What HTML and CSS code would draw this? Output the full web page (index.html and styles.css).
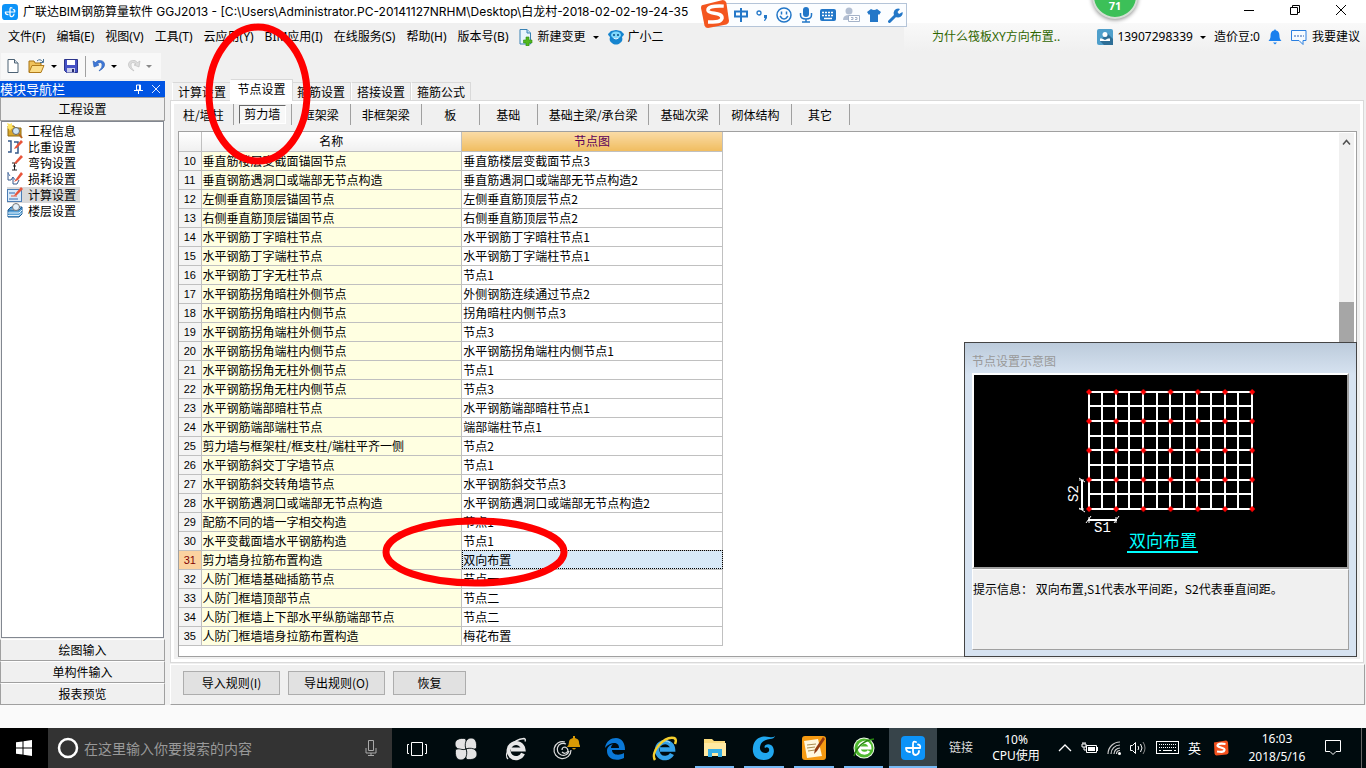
FILE: index.html
```html
<!DOCTYPE html>
<html lang="zh-CN">
<head>
<meta charset="utf-8">
<title>广联达BIM钢筋算量软件 GGJ2013</title>
<link rel="stylesheet" href="styles.css">
</head>
<body>
<header class="titlebar">
  <svg class="app-logo" width="16" height="16" viewBox="0 0 24 24"><rect width="24" height="24" rx="5" fill="#0d93f8"/><path d="M15 6q-3-1.500-3 2v8q0 3 3 3 3-1 3-4M5 12h14q1-3-2-3.500M5 12q0 4 4 4" fill="none" stroke="#fff" stroke-width="1.800" stroke-linecap="round"/></svg>
  <h1 class="title">广联达BIM钢筋算量软件 GGJ2013 - [C:\Users\Administrator.PC-20141127NRHM\Desktop\白龙村-2018-02-02-19-24-35</h1>
  <div class="window-buttons">
    <button aria-label="最小化"><svg width="12" height="12"><path d="M1 6.500h10" stroke="#000"/></svg></button>
    <button aria-label="还原"><svg width="12" height="12"><path d="M1.500 3.500h7v7h-7zM3.500 3.500v-2h7v7h-2" fill="none" stroke="#000"/></svg></button>
    <button aria-label="关闭"><svg width="12" height="12"><path d="M1 1l10 10M11 1L1 11" stroke="#000"/></svg></button>
  </div>
</header>

<nav class="menubar">
  <div class="menus">
    <button>文件(F)</button><button>编辑(E)</button><button>视图(V)</button><button>工具(T)</button><button>云应用(Y)</button><button>BIM应用(I)</button><button>在线服务(S)</button><button>帮助(H)</button><button>版本号(B)</button>
  </div>
  <button class="menu-item"><svg width="16" height="18" viewBox="0 0 16 18"><path d="M2 1.500h7l3.500 3.500v11H2z" fill="#e8f5fc" stroke="#3a82b4"/><path d="M9 1.500V5h3.500" fill="#bfe0f2" stroke="#3a82b4"/><path d="M8 9h3v3h3v3h-3v3H8v-3H5.500v-3H8z" fill="#52b81d" stroke="#2e8a10" stroke-width=".6"/></svg>新建变更<i class="caret"></i></button>
  <button class="menu-item"><svg width="16" height="16" viewBox="0 0 16 16"><path d="M3 2c2 0 3-1 5-1s3 1 5 1l3 3c0 1-1 2-2 3 1 3 0 5-2 6-2 2-6 2-8 0-2-1-3-3-2-6C1 7 0 6 0 5z" fill="#1685cf"/><ellipse cx="8" cy="6" rx="5" ry="3.500" fill="#80d8fb"/><circle cx="6" cy="6" r="1" fill="#064b80"/><circle cx="10" cy="6" r="1" fill="#064b80"/><path d="M5.500 9q2.500 2 5 0" fill="none" stroke="#fff"/></svg>广小二</button>
  <div class="account">
    <a class="tip-link" href="#">为什么筏板XY方向布置..</a>
    <button class="user"><svg width="16" height="16" viewBox="0 0 16 16"><rect width="16" height="16" rx="2" fill="#4f9fcb"/><path d="M10 4l6 6v6H7l-4-4z" fill="#2e6f97"/><circle cx="8" cy="5.500" r="2.500" fill="#fff"/><path d="M3 12V9.500h2L8 11l3-1.500h2V12z" fill="#fff"/></svg>13907298339<i class="caret"></i></button>
    <span class="beans">造价豆:0</span>
    <button aria-label="通知"><svg width="14" height="16" viewBox="0 0 14 16"><path d="M7 0l1 1.500c3 .8 3.500 3 3.500 6 0 2 .8 3 2 4.500H.5c1.200-1.500 2-2.500 2-4.500 0-3 .5-5.200 3.500-6zM5 13.500h4L7 15.500z" fill="#1a80ee"/></svg></button>
    <button class="suggest"><svg width="18" height="17" viewBox="0 0 18 17"><path d="M1.500 1.500h14.500v10h-3v4l-4-4H1.500z" fill="#f6fbff" stroke="#2a7fe0"/><path d="M4 7h10" stroke="#2a5fae" stroke-dasharray="2 1"/></svg>我要建议</button>
  </div>
</nav>

<div class="toolbar">
  <div class="tools">
    <button aria-label="新建"><svg width="14" height="16" viewBox="0 0 14 16"><path d="M2 1.500h6.500l3.500 3.500v9.500H2z" fill="#fff" stroke="#4d6274"/><path d="M8.500 1.500V5H12" fill="#d5e0ea" stroke="#4d6274"/></svg></button>
    <button class="open" aria-label="打开"><svg width="18" height="16" viewBox="0 0 18 16"><path d="M1 14V3h5l1 2h6v3" fill="#f0c25a" stroke="#a87414"/><path d="M1 14.500l3-7h12l-3 7z" fill="#fbdc86" stroke="#b07a1a"/><path d="M9 3q3-3 6 1M15.500 1v3.500H12" fill="none" stroke="#4b7394"/></svg></button><i class="caret"></i>
    <button class="save" aria-label="保存"><svg width="16" height="16" viewBox="0 0 16 16"><path d="M1.500 1.500h13v13h-11l-2-2z" fill="#4652c6" stroke="#2c348a"/><path d="M4 2h8v5H4z" fill="#fff"/><path d="M4 10h8v4.500H4z" fill="#c9cdec"/><path d="M9 11h2v3H9z" fill="#23296e"/></svg></button>
    <span class="rule"></span>
    <button aria-label="撤销"><svg width="14" height="16" viewBox="0 0 14 16"><path d="M1 3l1 6 5-2-2-1q4-3 5 0t-3 7q6-3 5.500-7T6 2.500L3.500 4.500z" fill="#3f78d8" stroke="#2459b0" stroke-width=".6"/></svg></button><i class="caret"></i>
    <button class="redo" aria-label="恢复"><svg width="14" height="16" viewBox="0 0 14 16"><path d="M13 3l-1 6-5-2 2-1q-4-3-5 0t3 7q-6-3-5.500-7T8 2.500l2.500 2z" fill="#ddd" stroke="#bbb" stroke-width=".6"/></svg></button><i class="caret dim"></i>
  </div>
</div>

<main class="workspace">
  <aside class="sidebar">
    <div class="side-title"><span>模块导航栏</span>
      <svg width="9" height="10" viewBox="0 0 9 10"><path d="M2.500 1h4v5h-4zM5.500 1v5M0 6.500h9M4.500 6v4" fill="none" stroke="#fff"/></svg>
      <svg width="8" height="8" viewBox="0 0 8 8"><path d="M0 0l8 8M8 0L0 8" stroke="#dfe9ff"/></svg>
    </div>
    <button class="side-btn">工程设置</button>
    <ul class="side-list">
      <li><svg width="16" height="16" viewBox="0 0 16 16"><path d="M1 3h6l1 2h6v8H1z" fill="#d9a72d" stroke="#8f6a12"/><path d="M0 0l3 1 2-1v3l2 2-3 1-1 2-1-2-2-1 1-2z" fill="#ffe566"/><circle cx="9" cy="8" r="3.500" fill="#cfe6f7" stroke="#666"/><path d="M12 11l3 4" stroke="#b5651d" stroke-width="2"/></svg>工程信息</li>
      <li><svg width="16" height="16" viewBox="0 0 16 16"><path d="M1 2h3v11H1M7 3h4v11H8" fill="none" stroke="#36598a" stroke-width="1.500"/><path d="M8 8l6-7 2 2-6 6-3 1z" fill="#e8543a"/></svg>比重设置</li>
      <li><svg width="16" height="16" viewBox="0 0 16 16"><path d="M5 8h5M7.500 8v7M5 15h5M6 11h3" stroke="#222"/><path d="M8 7l6-7 2 2-6 6-3 1z" fill="#e8543a"/></svg>弯钩设置</li>
      <li><svg width="16" height="16" viewBox="0 0 16 16"><path d="M1 1v8h3l2-3v7h4l2-4" fill="none" stroke="#36598a"/><path d="M1 2l2 3M6 6l3 4" stroke="#4f76b0"/><path d="M9 8l5-7 2 2-5 6-4 2z" fill="#e8543a"/></svg>损耗设置</li>
      <li class="current"><svg width="16" height="16" viewBox="0 0 16 16"><rect x=".5" y="2.500" width="14" height="12" fill="#d9ebfa" stroke="#4c7db4"/><path d="M2 6h6M2 12h9" stroke="#3568ad"/><path d="M4 9h6" stroke="#e8543a"/><path d="M8 7l6-7 2 2-6 6-3 1z" fill="#e8543a"/></svg><span>计算设置</span></li>
      <li><svg width="16" height="16" viewBox="0 0 16 16"><path d="M1 7l3-3h11l-3 3zM1 7v7h11l3-3V4" fill="#5ba3d8" stroke="#1d5d96"/><path d="M1 10h11l3-3M1 12.500h11l3-3" fill="none" stroke="#e5f3fc"/><circle cx="9" cy="4" r="3.500" fill="#e3f0fa" stroke="#777"/></svg>楼层设置</li>
    </ul>
    <button class="side-btn">绘图输入</button>
    <button class="side-btn">单构件输入</button>
    <button class="side-btn">报表预览</button>
  </aside>

  <section class="content">
    <div class="tabs" role="tablist">
      <button role="tab">计算设置</button><button role="tab" class="active" aria-selected="true">节点设置</button><button role="tab">箍筋设置</button><button role="tab">搭接设置</button><button role="tab">箍筋公式</button>
    </div>
    <div class="pane">
      <div class="subtabs">
        <button>柱/墙柱</button><button class="pressed"><span>剪力墙</span></button><button>框架梁</button><button>非框架梁</button><button>板</button><button>基础</button><button>基础主梁/承台梁</button><button>基础次梁</button><button>砌体结构</button><button>其它</button>
      </div>
      <div class="gridbox">
        <table class="nodes">
          <thead><tr><th class="num"></th><th>名称</th><th class="hot">节点图</th></tr></thead>
          <tbody>
            <tr><th>10</th><td>垂直筋楼层变截面锚固节点</td><td>垂直筋楼层变截面节点3</td></tr>
            <tr><th>11</th><td>垂直钢筋遇洞口或端部无节点构造</td><td>垂直筋遇洞口或端部无节点构造2</td></tr>
            <tr><th>12</th><td>左侧垂直筋顶层锚固节点</td><td>左侧垂直筋顶层节点2</td></tr>
            <tr><th>13</th><td>右侧垂直筋顶层锚固节点</td><td>右侧垂直筋顶层节点2</td></tr>
            <tr><th>14</th><td>水平钢筋丁字暗柱节点</td><td>水平钢筋丁字暗柱节点1</td></tr>
            <tr><th>15</th><td>水平钢筋丁字端柱节点</td><td>水平钢筋丁字端柱节点1</td></tr>
            <tr><th>16</th><td>水平钢筋丁字无柱节点</td><td>节点1</td></tr>
            <tr><th>17</th><td>水平钢筋拐角暗柱外侧节点</td><td>外侧钢筋连续通过节点2</td></tr>
            <tr><th>18</th><td>水平钢筋拐角暗柱内侧节点</td><td>拐角暗柱内侧节点3</td></tr>
            <tr><th>19</th><td>水平钢筋拐角端柱外侧节点</td><td>节点3</td></tr>
            <tr><th>20</th><td>水平钢筋拐角端柱内侧节点</td><td>水平钢筋拐角端柱内侧节点1</td></tr>
            <tr><th>21</th><td>水平钢筋拐角无柱外侧节点</td><td>节点1</td></tr>
            <tr><th>22</th><td>水平钢筋拐角无柱内侧节点</td><td>节点3</td></tr>
            <tr><th>23</th><td>水平钢筋端部暗柱节点</td><td>水平钢筋端部暗柱节点1</td></tr>
            <tr><th>24</th><td>水平钢筋端部端柱节点</td><td>端部端柱节点1</td></tr>
            <tr><th>25</th><td>剪力墙与框架柱/框支柱/端柱平齐一侧</td><td>节点2</td></tr>
            <tr><th>26</th><td>水平钢筋斜交丁字墙节点</td><td>节点1</td></tr>
            <tr><th>27</th><td>水平钢筋斜交转角墙节点</td><td>水平钢筋斜交节点3</td></tr>
            <tr><th>28</th><td>水平钢筋遇洞口或端部无节点构造</td><td>水平钢筋遇洞口或端部无节点构造2</td></tr>
            <tr><th>29</th><td>配筋不同的墙一字相交构造</td><td>节点1</td></tr>
            <tr><th>30</th><td>水平变截面墙水平钢筋构造</td><td>节点1</td></tr>
            <tr class="selected"><th>31</th><td>剪力墙身拉筋布置构造</td><td>双向布置</td></tr>
            <tr><th>32</th><td>人防门框墙基础插筋节点</td><td>节点一</td></tr>
            <tr><th>33</th><td>人防门框墙顶部节点</td><td>节点二</td></tr>
            <tr><th>34</th><td>人防门框墙上下部水平纵筋端部节点</td><td>节点二</td></tr>
            <tr><th>35</th><td>人防门框墙墙身拉筋布置构造</td><td>梅花布置</td></tr>
          </tbody>
        </table>
        <div class="scrollbar"><svg width="15" height="18" viewBox="0 0 15 18"><path d="M4 11.500l3.500-4 3.500 4" fill="none" stroke="#505050" stroke-width="1.500"/></svg><div class="thumb"></div></div>

        <div class="preview">
          <h2>节点设置示意图</h2>
          <div class="drawing">
            <svg width="374" height="192" viewBox="0 0 374 192">
              <defs>
                <pattern id="dots" x="111" y="13" width="27.200" height="29.250" patternUnits="userSpaceOnUse"><path d="M1 4l3-3 3 3-3 3z" fill="#f00"/></pattern>
              </defs>
              <path d="M114 17h165M114 31h165M114 46h165M114 61h165M114 75h165M114 90h165M114 105h165M114 119h165M114 134h165M115 17v117M128 17v117M142 17v117M155 17v117M169 17v117M183 17v117M196 17v117M210 17v117M223 17v117M237 17v117M251 17v117M264 17v117M278 17v117" stroke="#fff" stroke-width="2"/>
              <rect x="111" y="13" width="172" height="125" fill="url(#dots)"/>
              <path d="M108 105v30M114 145h29" stroke="#fff" stroke-width="2"/>
              <path d="M105 103l6 4M105 133l6 4M112 148l5-7M140 148l5-7M115 142v6M142 142v6M105 105h5M105 134h5" stroke="#fff"/>
              <text x="120" y="157" class="dim-text">S1</text>
              <text x="-127" y="104" transform="rotate(-90)" class="dim-text">S2</text>
              <text x="155" y="172" class="caption">双向布置</text>
              <path d="M153 177h71" stroke="#0ff" stroke-width="2"/>
            </svg>
          </div>
          <p class="hint">提示信息： 双向布置,S1代表水平间距，S2代表垂直间距。</p>
        </div>
      </div>
    </div>
    <div class="actions">
      <button>导入规则(I)</button><button>导出规则(O)</button><button class="short">恢复</button>
    </div>
  </section>
</main>

<footer class="taskbar">
  <button class="start" aria-label="开始"><svg width="16" height="16" viewBox="0 0 16 16"><path d="M0 2.300l6.500-.9v6.100H0zM7.500 1.200L16 0v7.500H7.500zM0 8.500h6.500v6.100L0 13.700zM7.500 8.500H16V16l-8.500-1.200z" fill="#fff"/></svg></button>
  <div class="search">
    <svg width="22" height="22" viewBox="0 0 22 22"><circle cx="11" cy="11" r="9" fill="none" stroke="#fff" stroke-width="2.500"/></svg>
    <input type="text" placeholder="在这里输入你要搜索的内容" aria-label="搜索">
    <svg width="12" height="18" viewBox="0 0 12 18"><path d="M3.500 1.500h5v10h-5zM1 9v5h10V9M6 14v3M3 16.500h6" fill="none" stroke="#aaa"/></svg>
  </div>
  <div class="apps">
    <button aria-label="任务视图"><svg width="22" height="16" viewBox="0 0 22 16"><path d="M5.500 1.500h11v13h-11zM3 3.500H1.500v9H3M19 3.500h1.500v9H19" fill="none" stroke="#fff"/></svg></button>
    <button aria-label="风扇"><svg width="22" height="22" viewBox="0 0 22 22"><g fill="#e4e4e4" stroke="#000b0e" stroke-width=".8"><path id="petal" d="M11 11C6 13 0 11 0 6 0 1 5 0 10 .5 13 4 9 7 11 11z"/><use href="#petal" transform="rotate(90 11 11)"/><use href="#petal" transform="rotate(180 11 11)"/><use href="#petal" transform="rotate(270 11 11)"/></g></svg></button>
    <button aria-label="浏览器"><svg width="24" height="24" viewBox="0 0 24 24"><path d="M19 16.500A7.500 7.500 0 1 1 19.500 12.500H7" fill="none" stroke="#e8e8e8" stroke-width="4"/><path d="M4 22C-1 17 8 2 20 1.500q2 .5 1 3" fill="none" stroke="#e8e8e8" stroke-width="1.300"/></svg></button>
    <button aria-label="提醒"><svg width="28" height="28" viewBox="0 0 28 28"><path d="M19 15a8.500 8.500 0 1 1-6-8M14 9a6 6 0 1 0 3 7M10 15q0-3 3-3 3 1 3 4-3 4-6 1" fill="none" stroke="#ddd" stroke-width="1.200"/><path d="M15 12q2-2 2-5t4-4V1h2v2q4 1 4 4t2 5zM20 13h4q-2 3-4 0z" fill="#d99a05"/></svg></button>
    <button aria-label="Edge"><svg width="22" height="22" viewBox="0 0 22 22"><path d="M1 10C2 3 7 0 12 0c6 0 9 5 9 12H8c0 5 7 6 12 3v5c-8 4-17 1-17-7 0-4 3-6 6-7-1 1-2 2-2 4h8c0-7-9-6-14 0z" fill="#0a78d6"/></svg></button>
    <button aria-label="Internet Explorer"><svg width="26" height="26" viewBox="0 0 26 26"><path d="M20 18A8 8 0 1 1 21 13.500H8" fill="none" stroke="#35a2e8" stroke-width="4.500"/><path d="M9 6.500a8 8 0 0 1 9 0" stroke="#b8e6ff" fill="none"/><path d="M3 24C-2 16 12 0 22 2q3 1 1 6" fill="none" stroke="#f5cf2e" stroke-width="2.500"/></svg></button>
    <button class="running" aria-label="文件资源管理器"><svg width="22" height="20" viewBox="0 0 22 20"><path d="M0 1h8l2 2h11v15H0z" fill="#fadb7d"/><path d="M0 5h22v13H0z" fill="#ffe9a2"/><path d="M4 11h14v8h-4v-4H8v4H4z" fill="#35aee6"/></svg></button>
    <button class="running" aria-label="搜狗浏览器"><svg width="24" height="24" viewBox="0 0 24 24"><path d="M23 0q-1 3-5 3Q9 4 8 11c-1 6 7 8 9 4 1-3-2-5-4-3-2-3 3-5 6-3 5 3 4 15-7 15C3 24 0 18 1 11 2 3 9-1 17 1q4 1 6-1z" fill="#20a8f0"/></svg></button>
    <button class="running" aria-label="便笺"><svg width="24" height="24" viewBox="0 0 24 24"><rect width="24" height="24" rx="3" fill="#f59a12"/><path d="M2 5l14-2 4 17-15 2z" fill="#fff8df"/><path d="M5 9l9-1M5 12l8-1M6 15l7-1" stroke="#aa8d52"/><path d="M21 1l2 2-8 12-3 3 1-5z" fill="#963b10"/></svg></button>
    <button class="running" aria-label="360浏览器"><svg width="22" height="24" viewBox="0 0 22 24"><circle cx="11" cy="12" r="10.500" fill="#eefbe8"/><circle cx="11" cy="12" r="9.500" fill="#4fb92f"/><path d="M16 15a5.500 5.500 0 1 1 1-3H6" fill="none" stroke="#fff" stroke-width="3"/><path d="M1 20Q6 5 21 3" fill="none" stroke="#288512" stroke-width="1.500"/></svg></button>
    <button class="running focus" aria-label="广联达"><svg width="24" height="24" viewBox="0 0 24 24"><rect width="24" height="24" rx="4" fill="#0d93f8"/><path d="M15 6q-3-1.500-3 2v8q0 3 3 3 3-1 3-4M5 12h14q1-3-2-3.500M5 12q0 4 4 4" fill="none" stroke="#fff" stroke-width="1.800" stroke-linecap="round"/></svg></button>
  </div>
  <span class="links">链接</span>
  <span class="cpu">10%<br>CPU使用</span>
  <div class="tray">
    <svg width="14" height="8" viewBox="0 0 14 8"><path d="M1 7l6-6 6 6" fill="none" stroke="#fff" stroke-width="1.300"/></svg>
    <svg width="17" height="14" viewBox="0 0 17 14"><path d="M5.500 4.500h10v7h-10zM1 3h4v3H1zM2 1v2M4 1v2M3 6v3h2" fill="none" stroke="#fff"/><path d="M7 6h7v4H7zM16 6h1v4h-1z" fill="#fff"/></svg>
    <svg width="14" height="14" viewBox="0 0 14 14"><path d="M1 13A12 12 0 0 1 13 1M4 13a9 9 0 0 1 9-9M7 13a6 6 0 0 1 6-6M9.500 13a3.500 3.500 0 0 1 3.500-3.500" fill="none" stroke="#ccc" stroke-width="1.200"/><circle cx="12.500" cy="12.500" r="1.500" fill="#fff"/></svg>
    <svg width="17" height="14" viewBox="0 0 17 14"><path d="M.5 4.500h2l3-3v11l-3-3h-2zM8 5q1.500 2 0 4M10.500 3q3 4 0 8" fill="none" stroke="#fff"/><path d="M13 1q4 6 0 12" fill="none" stroke="#888"/></svg>
    <svg width="23" height="14" viewBox="0 0 23 14"><rect x=".5" y=".5" width="22" height="12" fill="none" stroke="#fff"/><path d="M3 3.500h17M3 6.500h17" stroke="#fff" stroke-dasharray="1 1"/><path d="M3 9.500h2M7 9.500h9M18 9.500h2" stroke="#fff"/></svg>
    <span class="lang">英</span>
    <svg class="sogou" width="16" height="16" viewBox="0 0 32 32"><path d="M2 5l24-4q3 0 4 4l1 20q0 3-4 4L7 31q-3 0-4-4z" fill="#f4511e"/><path d="M25 8Q9 6 9 11c0 5 15 3 14 9-1 5-8 4-15 3" fill="none" stroke="#fff" stroke-width="4.500"/></svg>
  </div>
  <time class="clock">16:03<br>2018/5/16</time>
  <button class="notify" aria-label="操作中心"><svg width="18" height="18" viewBox="0 0 18 18"><path d="M1.500 1.500h15v11H12l-3 3-3-3H1.500z" fill="none" stroke="#fff"/></svg></button>
  <span class="desktop-edge"></span>
</footer>

<div class="ime">
  <svg class="ime-logo" width="28" height="28" viewBox="0 0 32 32"><path d="M1 6L25 0q3 0 4 3l3 21q0 3-3 4L8 32q-3 0-4-3L0 9q0-2 1-3z" fill="#f4561f"/><path d="M26 7Q7 6 8 12c1 5 17 1 16 9-2 5-8 4-16 4" fill="none" stroke="#fff" stroke-width="4"/></svg>
  <svg width="14" height="14" viewBox="0 0 14 14"><path d="M1 3.500h12v5H1zM7 0v14" fill="none" stroke="#2377c8" stroke-width="2"/></svg>
  <svg width="14" height="14" viewBox="0 0 14 14"><circle cx="4" cy="5" r="2" fill="none" stroke="#2377c8" stroke-width="1.300"/><path d="M9 7h3v3l-2 3H9l1-3H9z" fill="#2377c8"/></svg>
  <svg width="16" height="16" viewBox="0 0 16 16"><circle cx="8" cy="8" r="7" fill="none" stroke="#2377c8" stroke-width="1.500"/><path d="M5.500 4.500v3M10.500 4.500v3M4 9q4 6 8 0" fill="none" stroke="#2377c8" stroke-width="1.500"/></svg>
  <svg width="14" height="16" viewBox="0 0 14 16"><rect x="4" y="0" width="6" height="10" rx="3" fill="#2377c8"/><path d="M1.500 6v2q0 4 5.500 4t5.500-4V6M7 12v3M3 15h8" fill="none" stroke="#2377c8" stroke-width="1.500"/></svg>
  <svg width="16" height="14" viewBox="0 0 16 14"><rect y="1" width="16" height="12" rx="2" fill="#2377c8"/><path d="M2 4.500h12M2 7.500h12" stroke="#fff" stroke-width="1.500" stroke-dasharray="2 1"/><path d="M4 10.500h8" stroke="#fff" stroke-width="1.500"/></svg>
  <svg width="17" height="16" viewBox="0 0 17 16"><circle cx="6" cy="4" r="3.500" fill="#b3bfd2"/><path d="M0 13q0-5 6-5t5 5z" fill="#b3bfd2"/><path d="M5.500 8.500h11v6h-11zM8 10.500h2v2H8M12 10.500h2v2h-2" fill="#fff" stroke="#a5b3c9"/></svg>
  <svg width="14" height="14" viewBox="0 0 14 14"><path d="M4 1q3 2 6 0l4 3-2 3-1-1v8H3V6L2 7 0 4z" fill="#2377c8"/></svg>
  <svg width="15" height="15" viewBox="0 0 15 15"><path d="M1.500 13.500L8 7" stroke="#2377c8" stroke-width="3" stroke-linecap="round"/><path d="M12 1a4.500 4.500 0 1 0 2.500 3L11 6 9.500 4z" fill="#2377c8"/></svg>
</div>

<div class="score">71</div>

<svg class="marks" width="600" height="600" viewBox="0 0 600 600"><g fill="none" stroke="#f00" stroke-width="7"><ellipse cx="258" cy="94" rx="49" ry="67"/><ellipse cx="475" cy="552" rx="89" ry="31"/></g></svg>
</body>
</html>
```
FILE: styles.css
```css
* { box-sizing: border-box; }

body {
  margin: 0;
  min-height: 100vh;
  display: flex;
  flex-direction: column;
  position: relative;
  overflow: hidden;
  background: #f0f0f0;
  color: #000;
  font: 12px/16px "Noto Sans CJK SC", sans-serif;
}

button {
  border: 0;
  padding: 0;
  background: none;
  color: inherit;
  font: inherit;
  white-space: nowrap;
}

svg { display: block; flex: none; }

.caret {
  width: 0;
  height: 0;
  border: 3px solid transparent;
  border-top-color: #000;
  border-bottom: 0;
}
.caret.dim { border-top-color: #888; }

/* title bar */
.titlebar {
  display: flex;
  align-items: center;
  height: 23px;
  padding: 0 19px 0 2px;
  background: #fff;
}
.title {
  flex: 1;
  margin: 0 0 0 5px;
  font: 12px/16px Inter, "Noto Sans CJK SC", sans-serif;
  white-space: nowrap;
}
.window-buttons { display: flex; gap: 34px; margin-bottom: 3px; }

/* menu bar */
.menubar {
  display: flex;
  align-items: center;
  gap: 9px;
  height: 28px;
  padding-left: 8px;
  font-family: "Noto Sans", "Noto Sans CJK SC", sans-serif;
}
.menus { display: flex; gap: 11px; }
.menu-item { display: flex; align-items: center; gap: 4px; }
.menu-item .caret { margin-left: 3px; }
.account {
  display: flex;
  align-items: center;
  gap: 8px;
  width: 462px;
  height: 28px;
  margin-left: auto;
  padding: 0 6px 0 28px;
  background: linear-gradient(#f9f9f9, #f0f0f0);
}
.tip-link {
  margin-right: auto;
  color: #2f6600;
  text-decoration: none;
}
.user, .suggest { display: flex; align-items: center; gap: 4px; }
.user .caret { margin-left: 3px; }

/* toolbar */
.toolbar { height: 30px; padding: 2px 0 0 1px; }
.tools {
  display: flex;
  align-items: center;
  gap: 6px;
  width: 160px;
  height: 26px;
  padding-left: 5px;
  background: #f8f8f8;
}
.open { margin-left: 2px; }
.tools .caret { margin-left: -1px; }
.rule { width: 1px; height: 21px; background: #a0a0a0; }
.tools .redo { margin-left: 4px; }

/* workspace */
.workspace {
  flex: 1;
  display: flex;
  gap: 5px;
  margin-bottom: 23px;
  box-shadow: 0 23px #fafafa;
}
.sidebar {
  display: flex;
  flex-direction: column;
  width: 165px;
}
.side-title {
  display: flex;
  align-items: center;
  gap: 9px;
  height: 16px;
  padding-right: 5px;
  background: #0054e3;
  color: #fff;
}
.side-title span { flex: 1; font-size: 13px; line-height: 14px; }
.side-btn {
  height: 22px;
  border: 1px solid #a0a0a0;
  border-top-color: #fff;
}
.side-title + .side-btn { height: 24px; border-top-color: #a0a0a0; }
.side-list {
  flex: 1;
  margin: 0 1px 1px;
  padding: 1px 0 0 5px;
  border: 1px solid #828790;
  background: #fff;
  list-style: none;
}
.side-list li {
  display: flex;
  gap: 5px;
  width: 73px;
  height: 16px;
  white-space: nowrap;
}
.current { background: #d9d9d9; }

.content {
  flex: 1;
  min-width: 0;
  display: flex;
  flex-direction: column;
  padding-right: 1px;
}
.tabs {
  display: flex;
  align-items: flex-end;
  height: 19px;
  padding-left: 2px;
}
.tabs button {
  width: 60px;
  height: 18px;
  border: 1px solid #d9d9d9;
  border-bottom: 0;
  border-left-color: #fff;
}
.tabs .active {
  z-index: 1;
  width: 63px;
  height: 22px;
  margin: 0 -2px -1px -2px;
  padding-bottom: 3px;
  background: #fff;
}
.pane {
  flex: 1;
  display: flex;
  flex-direction: column;
  margin-right: 1px;
  border: 1px solid #d9d9d9;
  box-shadow: inset 0 0 0 3px #fff;
  padding: 3px 6px 5px 7px;
}
.subtabs { display: flex; height: 21px; margin: 0 -3px 6px -4px; }
.subtabs button {
  min-width: 58px;
  padding: 0 11px;
  border-right: 1px solid #a0a0a0;
}
.subtabs button:first-child { padding: 0 9px; }
.subtabs .pressed { padding: 1px 5px; }
.pressed span {
  display: block;
  height: 19px;
  border: 1px solid #fff;
  border-top-color: #696969;
  border-left-color: #696969;
  background: #f8f8f8;
}

.gridbox {
  position: relative;
  flex: 1;
  display: flex;
  justify-content: space-between;
  align-items: flex-start;
  border: 1px solid #a0a0a0;
  background: #fff;
}
.nodes {
  width: 544px;
  border-collapse: collapse;
  table-layout: fixed;
}
.nodes th, .nodes td {
  height: 19px;
  padding: 0 1px;
  border: 1px solid #c0c0c0;
  border-top: 0;
  border-left: 0;
  line-height: 18px;
  font-weight: 400;
  text-align: left;
  white-space: nowrap;
}
.nodes .num { width: 22px; }
.nodes thead th {
  background: linear-gradient(#fff, #f0f0f0);
  text-align: center;
}
.nodes thead .hot {
  background: linear-gradient(#fadba6, #f0bd60);
  color: #5a005a;
}
.nodes tbody th {
  background: #f4f4f4;
  font-family: "Liberation Sans", sans-serif;
  font-size: 11px;
  text-align: center;
}
.nodes td:nth-child(2) { background: #ffffe1; }
.nodes .selected th { background: #fbd3a0; color: #800000; }
.nodes .selected td:last-child {
  background: #d8e9f8;
  outline: 1px dotted #000;
  outline-offset: -1px;
}
.scrollbar {
  align-self: stretch;
  width: 15px;
  margin: 1px 2px 0 0;
  background: #f0f0f0;
}
.thumb { height: 120px; margin-top: 151px; background: #a6a6a6; }

/* node preview window */
.preview {
  position: absolute;
  right: -1px;
  bottom: -1px;
  width: 393px;
  padding: 10px 7px 6px;
  border: 1px solid #444;
  background: linear-gradient(#bccbdb, #d7e3f1 32px);
}
.preview h2 {
  margin: 0 0 4px;
  color: #999;
  font-size: 12px;
  font-weight: 400;
}
.drawing {
  border: 2px solid #fff;
  border-right-color: #a0a0a0;
  border-bottom-color: #a0a0a0;
  background: #000;
  overflow: hidden;
}
.dim-text { fill: #fff; font: 14px "Liberation Mono", monospace; }
.caption { fill: #0ff; font: 17px "Noto Sans CJK SC", sans-serif; }
.hint {
  height: 81px;
  margin: 0;
  padding: 11px 0;
  border: 1px solid #a0a0a0;
  border-top-color: #fff;
  border-left-color: #fff;
  background: #f0f0f0;
}

.actions {
  display: flex;
  gap: 8px;
  height: 41px;
  margin-top: 1px;
  padding: 6px 12px;
  border: 1px solid #a0a0a0;
  border-top-color: #fff;
  border-left-color: #fff;
}
.actions button {
  width: 97px;
  height: 24px;
  border: 1px solid #adadad;
  background: #e1e1e1;
}
.actions .short { width: 73px; }

/* taskbar */
.taskbar {
  z-index: 1;
  display: flex;
  align-items: center;
  height: 40px;
  background: #000b0e;
  color: #fff;
  font-family: "Noto Sans", "Noto Sans CJK SC", sans-serif;
  text-align: center;
}
.start {
  display: grid;
  place-items: center;
  width: 48px;
  height: 40px;
  background: #000;
}
.search {
  display: flex;
  align-items: center;
  gap: 5px;
  width: 344px;
  height: 40px;
  padding: 0 15px 0 9px;
  background: #333;
}
.search input {
  flex: 1;
  min-width: 0;
  border: 0;
  padding: 0;
  background: none;
  color: #fff;
  font: 14px/20px "Noto Sans CJK SC", sans-serif;
}
.search input::placeholder { color: #999; opacity: 1; }
.apps {
  display: grid;
  grid-template-columns: repeat(11, 1fr);
  width: 546px;
}
.apps button {
  display: grid;
  place-items: center;
  height: 40px;
  padding-top: 2px;
}
.apps .running {
  margin: 0 5px;
  border-bottom: 2px solid #76b9f5;
}
.apps .focus { margin: 0 1px; background: #37444a; }
.links { margin-left: 11px; color: #ddd; }
.cpu { width: 52px; margin-left: 17px; white-space: nowrap; }
.tray {
  display: flex;
  align-items: center;
  gap: 9px;
  margin-left: 16px;
}
.lang { font-size: 13px; }
.sogou { margin-left: 3px; }
.clock { width: 64px; margin-left: auto; line-height: 18px; }
.notify { margin-left: 15px; }
.desktop-edge {
  width: 5px;
  height: 40px;
  margin-left: 19px;
  border-left: 1px solid #666;
}

/* floating input-method bar */
.ime {
  position: absolute;
  top: 3px;
  left: 714px;
  display: flex;
  align-items: center;
  gap: 7px;
  width: 193px;
  height: 24px;
  border: 1px solid #b4c4d8;
  background: #fbfdff;
}
.ime-logo { margin: -3px -2px 0 -14px; }

.score {
  position: absolute;
  top: -27px;
  right: 228px;
  width: 46px;
  height: 46px;
  padding-top: 23px;
  border: 2px solid #d5ded5;
  border-radius: 50%;
  background: #3cc058;
  box-shadow: 0 1px 4px #888;
  color: #fff;
  font: 700 11px/16px "Open Sans", sans-serif;
  text-align: center;
}

.marks { position: absolute; top: 0; left: 0; pointer-events: none; }
```
